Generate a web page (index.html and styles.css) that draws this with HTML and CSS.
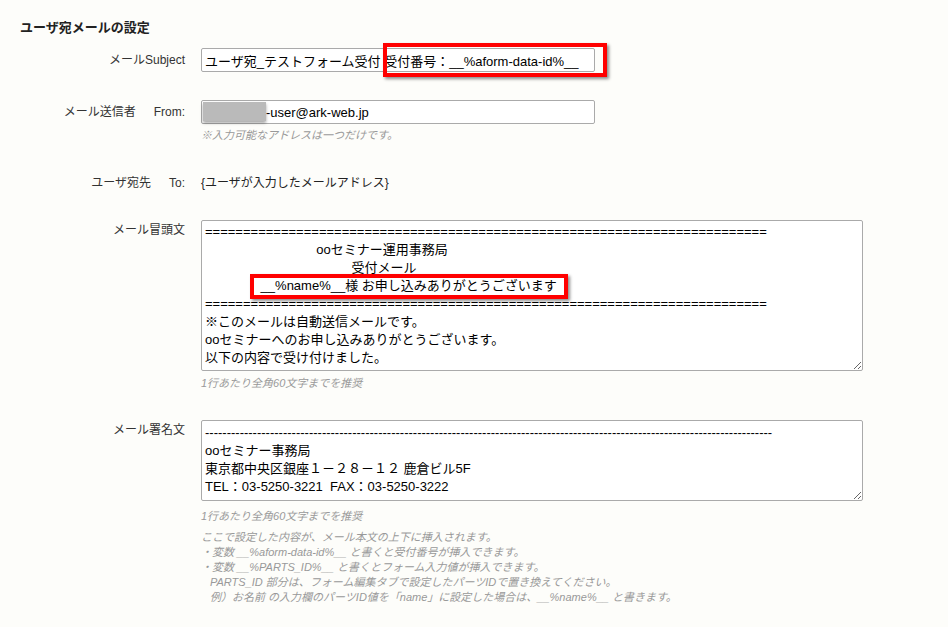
FILE: index.html
```html
<!DOCTYPE html>
<html lang="ja">
<head>
    <meta charset="UTF-8">
    <meta name="viewport" content="width=device-width, initial-scale=1.0">
    <title>ユーザ宛メールの設定</title>
    <link rel="stylesheet" href="styles.css">
</head>
<body>
    <div class="settings">
        <h2 class="settings-title">ユーザ宛メールの設定</h2>

        <div class="form-row row-subject">
            <label class="form-label" for="subject">メールSubject</label>
            <div class="form-field">
                <div class="field-wrap">
                    <input type="text" id="subject" class="text-input" value="ユーザ宛_テストフォーム受付 受付番号：__%aform-data-id%__">
                    <span class="highlight highlight-subject"></span>
                </div>
            </div>
        </div>

        <div class="form-row row-from">
            <label class="form-label" for="from">メール送信者<span class="label-en">From:</span></label>
            <div class="form-field">
                <div class="field-wrap">
                    <input type="text" id="from" class="text-input input-masked" value="-user@ark-web.jp">
                    <span class="mask"></span>
                </div>
                <p class="note">※入力可能なアドレスは一つだけです。</p>
            </div>
        </div>

        <div class="form-row row-to">
            <span class="form-label">ユーザ宛先<span class="label-en">To:</span></span>
            <div class="form-field">
                <span class="to-value">{ユーザが入力したメールアドレス}</span>
            </div>
        </div>

        <div class="form-row row-head">
            <label class="form-label" for="header">メール冒頭文</label>
            <div class="form-field">
                <div class="field-wrap">
                    <textarea id="header" class="text-area area-head">==========================================================================
　　　　　　　　  ooセミナー運用事務局
　　　　　　　　　　　 受付メール
　　　　 __%name%__様 お申し込みありがとうございます
==========================================================================
※このメールは自動送信メールです。
ooセミナーへのお申し込みありがとうございます。
以下の内容で受け付けました。</textarea>
                    <span class="highlight highlight-name"></span>
                </div>
                <p class="note hint-head">1行あたり全角60文字までを推奨</p>
            </div>
        </div>

        <div class="form-row row-sign">
            <label class="form-label" for="signature">メール署名文</label>
            <div class="form-field">
                <textarea id="signature" class="text-area area-sign">-----------------------------------------------------------------------------------------------------------------------------------
ooセミナー事務局
東京都中央区銀座１－２８－１２ 鹿倉ビル5F
TEL：03-5250-3221  FAX：03-5250-3222</textarea>
                <p class="note hint-sign">1行あたり全角60文字までを推奨</p>
                <div class="help">
                    <p>ここで設定した内容が、メール本文の上下に挿入されます。</p>
                    <p>・変数 __%aform-data-id%__ と書くと受付番号が挿入できます。</p>
                    <p>・変数 __%PARTS_ID%__ と書くとフォーム入力値が挿入できます。</p>
                    <p class="help-indent">PARTS_ID 部分は、フォーム編集タブで設定したパーツIDで置き換えてください。</p>
                    <p class="help-indent">例）お名前 の入力欄のパーツID値を「name」に設定した場合は、__%name%__ と書きます。</p>
                </div>
            </div>
        </div>
    </div>
</body>
</html>
```

FILE: styles.css
```css
* {
    margin: 0;
    padding: 0;
    box-sizing: border-box;
}

body {
    font-family: "Liberation Sans", "Noto Sans CJK JP", sans-serif;
    font-size: 12px;
    line-height: 18px;
    background-color: #fdfdfa;
    color: #333;
}

.settings {
    padding: 20px 20px 0 20px;
}

.settings-title {
    margin-bottom: 12px;
    font-size: 13px;
    line-height: 16px;
    font-weight: bold;
    color: #222;
}


/* two columns: right aligned label, then the field */
.form-row {
    display: grid;
    grid-template-columns: 165px 1fr;
    column-gap: 16px;
}

.form-label {
    text-align: right;
    font-size: 12px;
    line-height: 24px;
    color: #333;
}

.label-en {
    margin-left: 18px;
}

.row-from {
    margin-top: 28px;
}

.row-to {
    margin-top: 31px;
}

.row-to .form-label,
.to-value {
    font-size: 12px;
    line-height: 18px;
}

.to-value {
    color: #222;
}

.row-head {
    margin-top: 28px;
}

.row-sign {
    margin-top: 29px;
}

.row-head .form-label,
.row-sign .form-label {
    padding-top: 2px;
    line-height: 16px;
}


.field-wrap {
    position: relative;
    width: 662px;
}

.text-input {
    display: block;
    width: 394px;
    height: 24px;
    padding: 0 3px;
    border: 1px solid #aaa;
    border-radius: 2px;
    background-color: #fff;
    font-family: "Liberation Sans", "Noto Sans CJK JP", sans-serif;
    font-size: 13px;
    color: #000;
}

.input-masked {
    padding-left: 64px;
}

/* blurred block hiding the account name */
.mask {
    position: absolute;
    left: 2px;
    top: 2px;
    width: 63px;
    height: 19px;
    background-color: #bababa;
    box-shadow: 0 2px 3px rgba(0, 0, 0, 0.35);
    filter: blur(0.4px);
}

.text-area {
    display: block;
    width: 662px;
    padding: 2px 3px;
    border: 1px solid #aaa;
    border-radius: 2px;
    background-color: #fff;
    font-family: "Liberation Sans", "Noto Sans CJK JP", sans-serif;
    font-size: 13px;
    line-height: 18px;
    color: #000;
    overflow: hidden;
}

.area-head {
    height: 151px;
}

.area-sign {
    height: 81px;
    padding-top: 3px;
}


/* red frames drawn over the variables */
.highlight {
    position: absolute;
    border: 4px solid #f00;
    box-shadow: 2px 2px 3px rgba(0, 0, 0, 0.45);
    pointer-events: none;
}

.highlight-subject {
    left: 182px;
    top: -5px;
    width: 224px;
    height: 34px;
}

.highlight-name {
    left: 49px;
    top: 54px;
    width: 318px;
    height: 25px;
}


.note {
    margin-top: 3px;
    font-size: 11px;
    line-height: 16px;
    font-style: italic;
    color: #999;
}

.hint-head {
    margin-top: 4px;
}

.hint-sign {
    margin-top: 7px;
}

.help {
    margin-top: 6px;
    font-size: 11px;
    line-height: 15px;
    font-style: italic;
    color: #999;
}

.help-indent {
    padding-left: 9px;
}
```
